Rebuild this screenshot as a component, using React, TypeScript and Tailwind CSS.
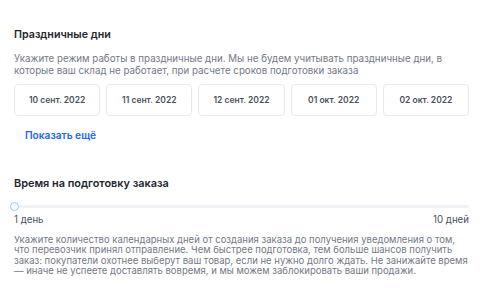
import React from "react";

const dates = ["10 сент. 2022", "11 сент. 2022", "12 сент. 2022", "01 окт. 2022", "02 окт. 2022"];

export default function App() {
  return (
    <div className="w-[483px] h-[301px] bg-white px-[14px] pt-[28px] text-[#1f2229]" style={{ fontFamily: "Inter, 'Noto Sans', sans-serif" }}>
      <div className="text-[10.7px] font-semibold leading-[14px] text-[#23262d]">Праздничные дни</div>
      <p className="mt-[11px] text-[9.75px] leading-[11.5px] text-[#737888]">
        Укажите режим работы в праздничные дни. Мы не будем учитывать праздничные дни, в которые ваш склад не работает, при расчете сроков подготовки заказа
      </p>
      <div className="mt-[8px] grid grid-cols-5 gap-[6px]">
        {dates.map((d) => (
          <div key={d} className="h-[32px] flex items-center justify-center rounded-[4px] border border-[#e8eaef] text-[8.5px] font-semibold text-[#4a4f5c]">
            {d}
          </div>
        ))}
      </div>
      <div className="mt-[12px] pl-[11px] text-[10.2px] font-semibold leading-[14px] text-[#1b66f5]">Показать ещё</div>
      <div className="mt-[34px] text-[10.9px] font-semibold leading-[14px] text-[#23262d]">Время на подготовку заказа</div>
      <div className="relative mt-[10px] h-[12px]">
        <div className="absolute left-0 right-0 top-[5px] h-[3px] rounded bg-[#f1f2f5]" />
        <div className="absolute left-[-4px] top-[2px] w-[9px] h-[9px] rounded-full border-[1.5px] border-[#93c6fa] bg-white" />
      </div>
      <div className="mt-[2px] flex justify-between text-[9.7px] leading-[12px] text-[#4a4f5c]">
        <span>1 день</span>
        <span>10 дней</span>
      </div>
      <p className="mt-[8.7px] text-[9.5px] leading-[10.6px] text-[#737888]">
        Укажите количество календарных дней от создания заказа до получения уведомления о том, что перевозчик принял отправление. Чем быстрее подготовка, тем больше шансов получить заказ: покупатели охотнее выберут ваш товар, если не нужно долго ждать. Не занижайте время — иначе не успеете доставлять вовремя, и мы можем заблокировать ваши продажи.
      </p>
    </div>
  );
}
